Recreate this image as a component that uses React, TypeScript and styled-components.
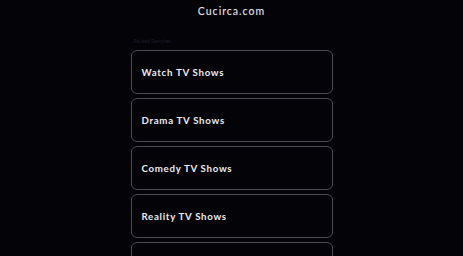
import React from 'react';
import styled, { createGlobalStyle } from 'styled-components';

const GlobalStyle = createGlobalStyle`
  html, body {
    margin: 0;
    padding: 0;
    background: #040308;
  }
  body {
    font-family: Lato, "Open Sans", sans-serif;
  }
`;

const Page = styled.div`
  display: flex;
  flex-direction: column;
  align-items: center;
  height: 256px;
  overflow: hidden;
`;

const Domain = styled.div`
  margin-top: 4px;
  color: #e4e4e8;
  font-size: 10.5px;
  font-weight: 500;
  letter-spacing: 1px;
  line-height: 15px;
`;

const Links = styled.div`
  width: 202px;
  margin-top: 19px;
  display: flex;
  flex-direction: column;
  gap: 4px;
`;

const Caption = styled.div`
  color: #1d1c2a;
  font-size: 5px;
  line-height: 6px;
  padding-left: 3px;
  margin-bottom: 2px;
`;

const LinkBox = styled.a`
  display: flex;
  align-items: center;
  box-sizing: border-box;
  height: 44px;
  padding-left: 10px;
  padding-bottom: 1px;
  border: 1px solid #4b4a52;
  border-radius: 6px;
  color: #ececf0;
  font-size: 9.7px;
  font-weight: 700;
  letter-spacing: 0.7px;
  text-decoration: none;
`;

const links = ['Watch TV Shows', 'Drama TV Shows', 'Comedy TV Shows', 'Reality TV Shows', 'Classic TV Shows'];

export default function App() {
  return (
    <Page>
      <GlobalStyle />
      <Domain>Cucirca.com</Domain>
      <Links>
        <Caption>Related Searches</Caption>
        {links.map((l) => (
          <LinkBox key={l} href="#">{l}</LinkBox>
        ))}
      </Links>
    </Page>
  );
}
